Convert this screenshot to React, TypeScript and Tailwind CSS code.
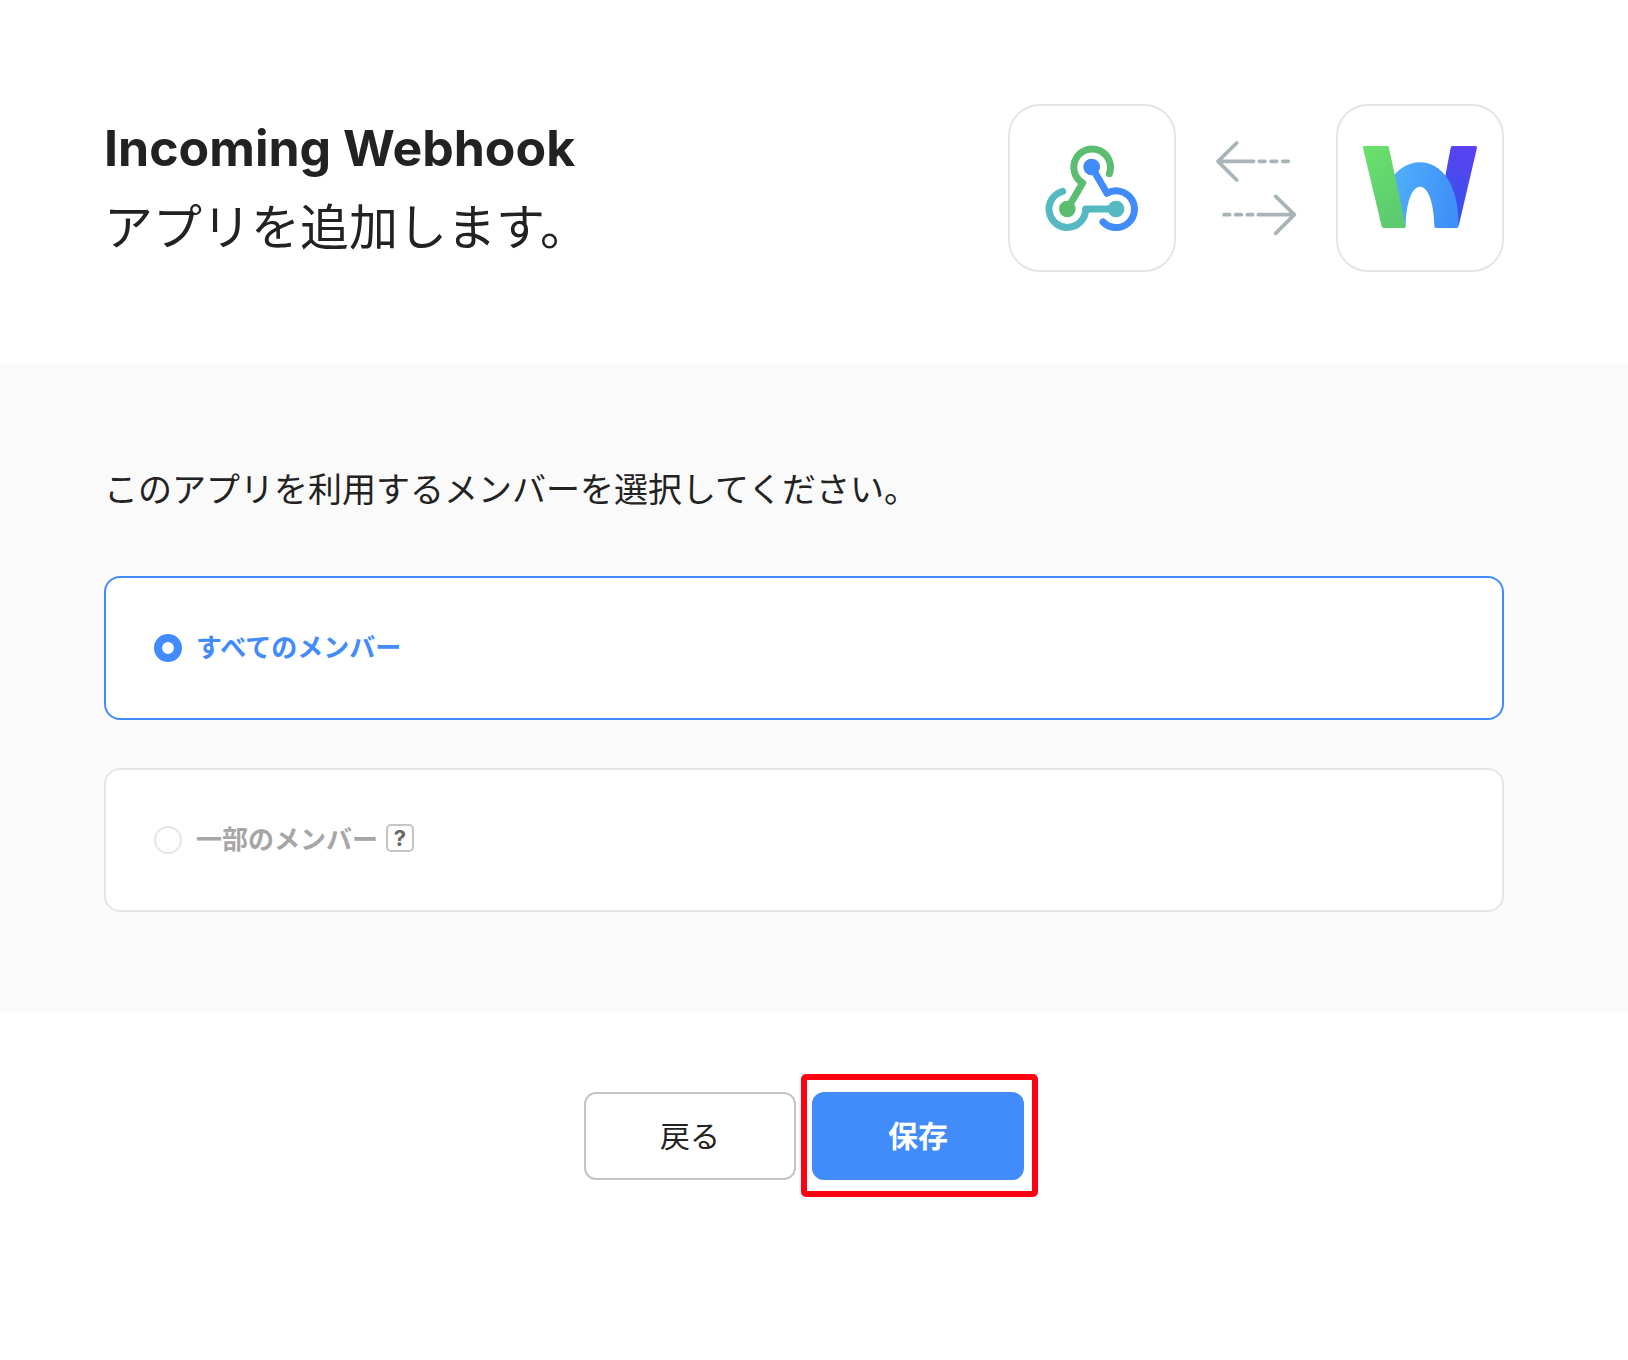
import { useState } from "react";

const fontStack =
  "font-['Inter','Noto_Sans_CJK_JP',sans-serif] text-[#222222]";

function WebhookLogo() {
  return (
    <svg
      viewBox="30 33 492 492"
      className="size-full"
      fill="none"
      strokeWidth="21"
      strokeLinecap="round"
      strokeLinejoin="round"
      aria-label="Incoming Webhook"
      role="img"
    >
      <g stroke="#5bbd6f">
        <path d="M328 236A55 55 0 1 0 248 264L202 342" />
        <circle cx="202" cy="342" r="25" fill="#5bbd6f" stroke="none" />
      </g>
      <g stroke="#54b9c1">
        <path d="M188 289A55 55 0 1 0 257 342H348" />
        <circle cx="348" cy="342" r="25" fill="#54b9c1" stroke="none" />
      </g>
      <g stroke="#428bfa">
        <path d="M275 216L321 295A55 55 0 1 1 309 381" />
        <circle cx="275" cy="216" r="25" fill="#428bfa" stroke="none" />
      </g>
    </svg>
  );
}

function WorksLogo() {
  return (
    <svg viewBox="39 33 492 492" className="size-full" aria-label="W" role="img">
      <defs>
        <linearGradient id="green" x1="0" y1="0" x2="0.4" y2="1">
          <stop offset="0" stopColor="#6ae26c" />
          <stop offset="1" stopColor="#5dcb70" />
        </linearGradient>
        <linearGradient id="sky" x1="0" y1="0" x2="1" y2="0.2">
          <stop offset="0" stopColor="#51b1fb" />
          <stop offset="1" stopColor="#4090f8" />
        </linearGradient>
        <linearGradient id="violet" x1="0.5" y1="0" x2="0.3" y2="1">
          <stop offset="0" stopColor="#5a42f2" />
          <stop offset="1" stopColor="#2f55e8" />
        </linearGradient>
      </defs>
      <path
        d="M382 153H452Q457 153 456 158L401 393L350 300L377 158Q378 153 382 153Z"
        fill="url(#violet)"
      />
      <path
        d="M200 252C218 222 250 202 285 202C348 202 401 265 401 392Q401 399 394 399H334Q328 399 328 393C327 325 310 275 285 275C260 275 243 325 242 393L225 390Z"
        fill="url(#sky)"
      />
      <path
        d="M118 153H186Q191 153 192 158L242 392Q243 399 236 399H177Q171 399 170 394L114 159Q113 153 118 153Z"
        fill="url(#green)"
      />
    </svg>
  );
}

function SyncArrows() {
  return (
    <svg
      viewBox="-72 -78 480 504"
      className="h-[168px] w-[160px]"
      fill="none"
      stroke="#a9b4b8"
      strokeWidth="11"
      strokeLinecap="round"
      strokeLinejoin="round"
      aria-hidden="true"
    >
      <path d="M110 39L54 94L110 150M54 94H161M178 94H195M213 94H230M248 94H265" />
      <path d="M227 199L283 254L227 310M283 254H175M72 254H89M107 254H124M142 254H158" />
    </svg>
  );
}

const tile =
  "size-[168px] shrink-0 overflow-hidden rounded-[32px] border-2 border-[#e5e5e5] bg-white";

const radio =
  "size-7 shrink-0 appearance-none rounded-full border-2 border-[#e5e5e5] bg-white checked:border-8 checked:border-[#428bfa]";

export default function App() {
  const [target, setTarget] = useState("all");
  const all = target === "all";

  return (
    <main className={`min-h-screen bg-white ${fontStack}`} lang="ja">
      <header className="flex items-center justify-between pt-[104px] pr-[124px] pb-[92px] pl-[104px]">
        <h1 className="text-[49px] leading-[80px] font-normal">
          <strong className="block text-[50px] font-bold">
            Incoming Webhook
          </strong>
          アプリを追加します。
        </h1>
        <div className="flex items-center">
          <div className={tile}>
            <WebhookLogo />
          </div>
          <SyncArrows />
          <div className={tile}>
            <WorksLogo />
          </div>
        </div>
      </header>

      <section className="bg-[#fafafa] pt-[100px] pr-[124px] pb-[100px] pl-[104px]">
        <fieldset>
          <legend className="mb-[60px] text-[34px] leading-[52px]">
            このアプリを利用するメンバーを選択してください。
          </legend>
          <div className="flex flex-col gap-12 text-[26px] leading-10 font-bold">
            <label
              className={`flex h-36 items-center gap-[14px] rounded-2xl border-2 bg-white px-12 ${
                all ? "border-[#428bfa] text-[#428bfa]" : "border-[#e5e5e5] text-[#a6a6a6]"
              }`}
            >
              <input
                type="radio"
                name="target"
                checked={all}
                onChange={() => setTarget("all")}
                className={radio}
              />
              すべてのメンバー
            </label>
            <div
              className={`flex h-36 items-center rounded-2xl border-2 bg-white px-12 ${
                all ? "border-[#e5e5e5] text-[#a6a6a6]" : "border-[#428bfa] text-[#428bfa]"
              }`}
            >
              <label className="flex items-center gap-[14px]">
                <input
                  type="radio"
                  name="target"
                  checked={!all}
                  onChange={() => setTarget("some")}
                  className={radio}
                />
                一部のメンバー
              </label>
              <button
                type="button"
                className="mb-1 ml-2 flex size-7 items-center justify-center rounded-[5px] border-2 border-[#c5c5c5] text-[22px] leading-6 font-bold text-[#666666]"
              >
                ?
              </button>
            </div>
          </div>
        </fieldset>
      </section>

      <footer className="flex justify-center gap-4 pt-20 pr-[124px] pb-20 pl-[104px] text-[30px]">
        <button
          type="button"
          className="h-[88px] w-[212px] rounded-xl border-2 border-[#c5c5c5] bg-white"
        >
          戻る
        </button>
        <div className="relative">
          <button
            type="button"
            className="h-[88px] w-[212px] rounded-xl bg-[#428bfa] font-bold text-white"
          >
            保存
          </button>
          <div className="pointer-events-none absolute -top-[18px] -right-[14px] -bottom-[17px] -left-[11px] rounded-[5px] border-6 border-[#ff0010]" />
        </div>
      </footer>
    </main>
  );
}
